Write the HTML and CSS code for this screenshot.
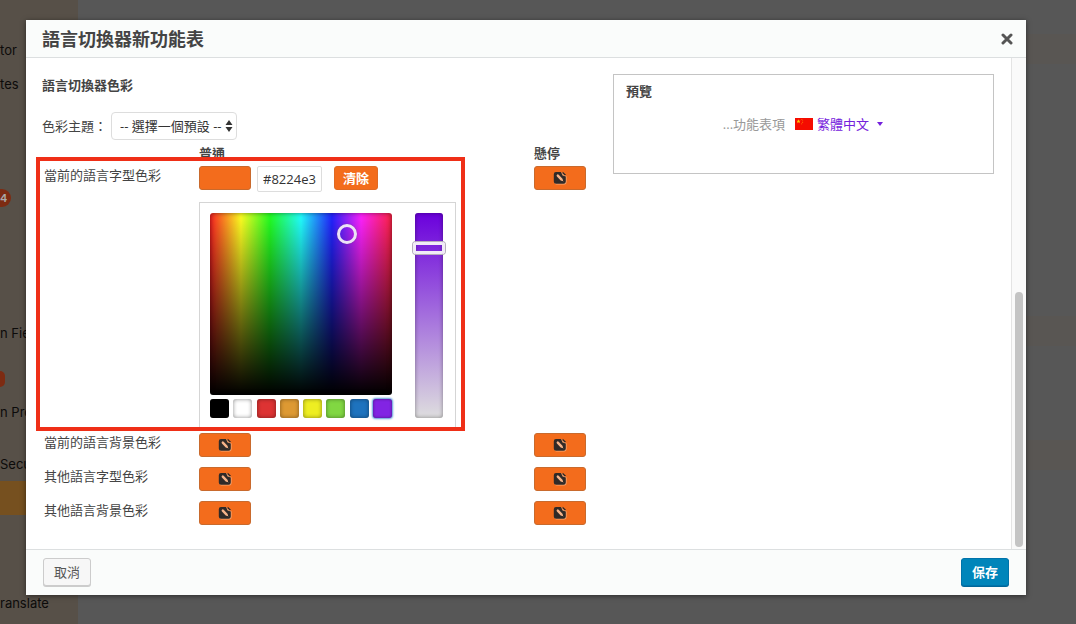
FILE: index.html
```html
<!DOCTYPE html>
<html lang="zh-Hant">
<head>
<meta charset="utf-8">
<title>語言切換器新功能表</title>
<link rel="stylesheet" href="styles.css">
</head>
<body>
<svg class="defs" aria-hidden="true">
  <symbol id="edit" viewBox="0 0 14 14">
    <path d="M3.500 1.500H9L13.600 5.500V11A2.500 2.500 0 0 1 11 13.500H3.500A2 2 0 0 1 1.500 11.500Z" fill="#f9a56f"/>
    <path d="M3 1H8L9.600 4.400L12.800 5.600V10.500A2.200 2.200 0 0 1 10.600 12.700H3A2.200 2.200 0 0 1 .8 10.500V3.200A2.200 2.200 0 0 1 3 1Z" fill="#2f2a28"/>
    <path d="M9.800 .8L13 3.800L11.800 4.600L9.400 2.300Z" fill="#2f2a28"/>
    <path d="M4.800 4.600L8.600 8.600" stroke="#f7b48a" stroke-width="2.400" stroke-linecap="round"/>
    <path d="M9 9L9.800 9.900" stroke="#f7b48a" stroke-width="1" stroke-linecap="round"/>
  </symbol>
</svg>
<div class="page">
  <nav class="side">
    <a href="#" class="side-item">tor</a>
    <a href="#" class="side-item">tes</a>
    <div class="side-item after-updates"><span class="count">4</span></div>
    <a href="#" class="side-item after-fields">n Fie</a>
    <div class="side-item dot-row"><span class="count dot"></span></div>
    <a href="#" class="side-item">n Pro</a>
    <a href="#" class="side-item after-pro">Secu</a>
    <div class="side-item active"></div>
    <a href="#" class="side-item after-active">ranslate</a>
  </nav>
  <main class="backdrop">
    <div class="band"></div>
    <div class="band band-two"></div>
    <div class="band band-three"></div>
  </main>
</div>

<div class="modal" role="dialog" aria-labelledby="dialog-title">
  <header class="modal-head">
    <h1 id="dialog-title">語言切換器新功能表</h1>
    <button class="close" aria-label="關閉"><svg viewBox="0 0 12 12" width="12" height="12"><path d="M2 2L10 10M10 2L2 10" stroke="#555" stroke-width="3" stroke-linecap="round"/></svg></button>
  </header>
  <div class="modal-body">
    <div class="content">
      <section class="settings">
        <h2>語言切換器色彩</h2>
        <div class="theme">
          <label for="preset">色彩主題：</label>
          <div class="select">
            <select id="preset"><option>-- 選擇一個預設 --</option></select>
            <svg viewBox="0 0 8 12" width="8" height="12" aria-hidden="true"><path d="M4 0L7.500 5H.5ZM4 12L7.500 7H.5Z" fill="#333"/></svg>
          </div>
        </div>
        <div class="colors">
          <table>
            <thead>
              <tr><th class="name"></th><th class="normal">普通</th><th>懸停</th></tr>
            </thead>
            <tbody>
              <tr>
                <td>當前的語言字型色彩</td>
                <td>
                  <div class="picker-row">
                    <button class="swatch-button" aria-label="選擇色彩"></button>
                    <input class="hex" type="text" value="#8224e3" aria-label="色彩值">
                    <button class="clear">清除</button>
                  </div>
                  <div class="picker">
                    <div class="picker-left">
                      <div class="field"><span class="handle"></span></div>
                      <div class="palette">
                        <button class="chip black" aria-label="黑"></button>
                        <button class="chip white" aria-label="白"></button>
                        <button class="chip red" aria-label="紅"></button>
                        <button class="chip orange" aria-label="橙"></button>
                        <button class="chip yellow" aria-label="黃"></button>
                        <button class="chip green" aria-label="綠"></button>
                        <button class="chip blue" aria-label="藍"></button>
                        <button class="chip purple" aria-label="紫"></button>
                      </div>
                    </div>
                    <input class="saturation" type="range" min="0" max="100" value="85" aria-label="飽和度">
                  </div>
                </td>
                <td><button class="swatch-button" aria-label="選擇色彩"><svg><use href="#edit"/></svg></button></td>
              </tr>
              <tr>
                <td>當前的語言背景色彩</td>
                <td><button class="swatch-button" aria-label="選擇色彩"><svg><use href="#edit"/></svg></button></td>
                <td><button class="swatch-button" aria-label="選擇色彩"><svg><use href="#edit"/></svg></button></td>
              </tr>
              <tr>
                <td>其他語言字型色彩</td>
                <td><button class="swatch-button" aria-label="選擇色彩"><svg><use href="#edit"/></svg></button></td>
                <td><button class="swatch-button" aria-label="選擇色彩"><svg><use href="#edit"/></svg></button></td>
              </tr>
              <tr>
                <td>其他語言背景色彩</td>
                <td><button class="swatch-button" aria-label="選擇色彩"><svg><use href="#edit"/></svg></button></td>
                <td><button class="swatch-button" aria-label="選擇色彩"><svg><use href="#edit"/></svg></button></td>
              </tr>
            </tbody>
          </table>
          <div class="highlight"></div>
        </div>
      </section>
      <aside class="preview">
        <h2>預覽</h2>
        <div class="menu">
          <span class="menu-item">...功能表項</span>
          <a href="#" class="lang">
            <svg viewBox="0 0 18 12" width="18" height="12" aria-hidden="true"><path d="M0 0H18V12H0Z" fill="#f50b00"/><path d="M3.500 1.200L4.100 2.800H5.600L4.400 3.700L4.900 5.200L3.500 4.300L2.100 5.200L2.600 3.700L1.400 2.800H2.900Z" fill="#fc0"/><path d="M6.500 1h.8v.8h-.8ZM7.300 2.500h.8v.8h-.8ZM7.300 4.200h.8v.8h-.8ZM6.300 5.400h.8v.8h-.8Z" fill="#f90"/></svg>
            <span>繁體中文</span>
            <svg class="caret" viewBox="0 0 6 4" width="6" height="4" aria-hidden="true"><path d="M0 0H6L3 4Z" fill="#7420dc"/></svg>
          </a>
        </div>
      </aside>
    </div>
    <div class="track"><div class="thumb"></div></div>
  </div>
  <footer class="modal-foot">
    <button class="cancel">取消</button>
    <button class="save">保存</button>
  </footer>
</div>
</body>
</html>
```
FILE: styles.css
```css
* { box-sizing: border-box; }
body {
  margin: 0;
  font: 13px/18px "Open Sans", "Noto Sans CJK TC", sans-serif;
  color: #444;
  background: #575757;
}
button, input, select { font: inherit; margin: 0; padding: 0; }
h1, h2 { margin: 0; }
.defs { position: absolute; width: 0; height: 0; }

.page { display: flex; height: 100vh; overflow: hidden; }
.side {
  width: 78px;
  padding-top: 33px;
  background: #575048;
  font-family: Inter, sans-serif;
  overflow: hidden;
  flex: none;
}
.side-item {
  display: flex;
  align-items: center;
  height: 34px;
  color: #0c0b0a;
  text-decoration: none;
  white-space: nowrap;
}
.after-updates { margin-top: 80px; }
.after-fields { margin-top: 101px; }
.dot-row { margin-top: 12px; height: 33px; }
.after-pro { margin-top: 18px; }
.active { background: #76501f; }
.after-active { margin-top: 71px; }
.count {
  width: 11px;
  height: 18px;
  border-radius: 0 9px 9px 0;
  background: #7d2b12;
  color: #aaa;
  font-size: 11px;
  font-weight: 600;
}
.dot { width: 5px; height: 16px; }
.backdrop { flex: 1; padding-top: 34px; }
.band { height: 30px; background: #595653; }
.band-two { margin-top: 252px; }
.band-three { margin-top: 94px; }

.modal {
  position: absolute;
  inset: 20px 50px 29px 26px;
  display: flex;
  flex-direction: column;
  background: #fff;
  box-shadow: 0 1px 5px rgba(0, 0, 0, .5);
}
.modal-head {
  display: flex;
  align-items: center;
  justify-content: space-between;
  height: 38px;
  padding: 0 13px 0 16px;
  background: #fafcfb;
  border-bottom: 1px solid #dcdfe0;
}
.modal-head h1 { font-size: 18px; line-height: 24px; font-weight: 600; }
.close { display: flex; border: 0; background: none; }

.modal-body { display: flex; flex: 1; min-height: 0; overflow: hidden; }
.content {
  display: flex;
  justify-content: space-between;
  align-items: flex-start;
  flex: 1;
  padding: 16px 17px 0 16px;
}
h2 { font-size: 13px; line-height: 18px; font-weight: 600; }
.settings { padding-top: 2px; }
.theme { display: flex; align-items: center; gap: 4px; margin: 18px 0 6px; }
.select { position: relative; }
.select select {
  appearance: none;
  width: 126px;
  height: 28px;
  padding-left: 8px;
  border: 1px solid #ddd;
  border-radius: 4px;
  background: #fff;
  color: #333;
}
.select svg { position: absolute; right: 4px; top: 8px; pointer-events: none; }

.colors { position: relative; }
table { border-collapse: collapse; }
th { height: 15px; padding: 0; text-align: left; line-height: 15px; font-weight: 600; }
.name { width: 157px; }
.normal { width: 335px; }
td { padding: 5px 0; vertical-align: top; }
td:first-child { padding-left: 2px; }
tr:first-child > td { padding-bottom: 0; }
.swatch-button {
  display: flex;
  align-items: center;
  justify-content: center;
  width: 52px;
  height: 24px;
  border: 1px solid #c96a2d;
  border-radius: 3px;
  background: #f36c1c;
}
.swatch-button svg { width: 14px; height: 14px; }
.picker-row { display: flex; align-items: flex-start; height: 36px; }
.hex {
  width: 65px;
  height: 26px;
  margin: 0 12px 0 6px;
  padding: 0 5px;
  border: 1px solid #ddd;
  border-radius: 2px;
  color: #333;
}
.clear {
  width: 44px;
  height: 24px;
  border: 1px solid #e06a24;
  border-radius: 3px;
  background: #f36c1c;
  color: #fff;
  font-weight: 700;
  line-height: 18px;
}
.picker {
  display: flex;
  justify-content: space-between;
  width: 257px;
  height: 226px;
  padding: 10px 9px 9px 10px;
  border: 1px solid #d5d5d5;
  background: #fff;
}
.field {
  position: relative;
  width: 182px;
  height: 182px;
  border-radius: 3px;
  background:
    linear-gradient(transparent, #000),
    linear-gradient(to right, #ff2222, #ffff22 17%, #22ff22 33%, #22ffff 50%, #2222ff 67%, #ff22ff 83%, #ff2244);
  box-shadow: inset 0 0 5px rgba(0, 0, 0, .5);
}
.handle {
  position: absolute;
  left: 127px;
  top: 11px;
  width: 20px;
  height: 20px;
  border: 3px solid #ece3f6;
  border-radius: 50%;
  box-shadow: 0 0 1px #555;
}
.palette { display: flex; justify-content: space-between; margin-top: 4px; }
.chip {
  width: 19px;
  height: 19px;
  border: 0;
  border-radius: 3px;
  box-shadow: inset 0 0 4px rgba(0, 0, 0, .45);
}
.black { background: #000; }
.white { background: #fff; }
.red { background: #dd3333; }
.orange { background: #dd9933; }
.yellow { background: #eeee22; }
.green { background: #81d742; }
.blue { background: #1e73be; }
.purple { background: #8224e3; box-shadow: inset 0 0 3px rgba(0, 0, 0, .45), 0 0 2px 1px #5b9dd9; }
.saturation {
  appearance: none;
  writing-mode: vertical-lr;
  direction: rtl;
  width: 34px;
  height: 205px;
  background: none;
}
.saturation::-webkit-slider-runnable-track {
  width: 28px;
  height: 205px;
  border-radius: 3px;
  background: linear-gradient(#6a00dc, #dedede);
  box-shadow: inset 0 0 4px rgba(0, 0, 0, .4);
}
.saturation::-webkit-slider-thumb {
  appearance: none;
  width: 32px;
  height: 12px;
  margin-left: -2px;
  border: 3px solid #f1ebf7;
  border-radius: 3px;
  box-shadow: 0 0 0 1px #b5aebb;
}
.highlight {
  position: absolute;
  left: -6px;
  top: 11px;
  width: 429px;
  height: 274px;
  border: 4px solid #ef2f17;
  pointer-events: none;
}

.preview {
  width: 381px;
  height: 100px;
  padding: 7px 13px 7px 12px;
  border: 1px solid #c4c4c4;
}
.menu { display: flex; justify-content: center; gap: 10px; margin-top: 15px; }
.menu-item { color: #999; }
.lang { display: flex; align-items: center; gap: 4px; color: #7420dc; text-decoration: none; }
.caret { margin-left: 4px; }

.track { width: 15px; padding: 234px 3px 2px; border-left: 1px solid #e4e4e4; background: #fafafa; display: flex; }
.thumb { flex: 1; border-radius: 4px; background: #c4c4c4; }

.modal-foot {
  display: flex;
  align-items: center;
  justify-content: space-between;
  height: 46px;
  padding: 0 17px 2px;
  background: #fafcfb;
  border-top: 1px solid #dcdfe0;
}
.cancel, .save { width: 48px; height: 28px; border-radius: 3px; }
.cancel { border: 1px solid #ccc; background: #f7f7f7; color: #555; box-shadow: 0 1px 0 #ccc; }
.save { border: 1px solid #0073aa; background: #0085ba; color: #fff; font-weight: 600; box-shadow: 0 1px 0 #006799; }
```
